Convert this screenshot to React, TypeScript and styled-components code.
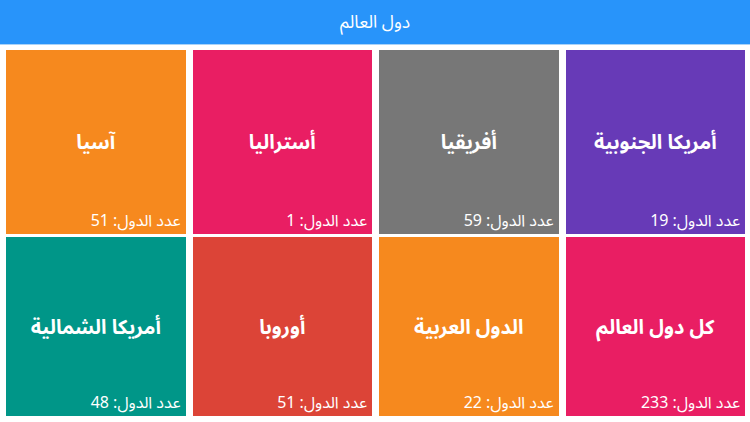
import styled, { createGlobalStyle } from "styled-components";

type Region = {
  name: string;
  count: number;
  color: string;
};

const regions: Region[] = [
  { name: "أمريكا الجنوبية", count: 19, color: "#673ab7" },
  { name: "أفريقيا", count: 59, color: "#777777" },
  { name: "أستراليا", count: 1, color: "#e91e63" },
  { name: "آسيا", count: 51, color: "#f6891e" },
  { name: "كل دول العالم", count: 233, color: "#e91e63" },
  { name: "الدول العربية", count: 22, color: "#f6891e" },
  { name: "أوروبا", count: 51, color: "#dc4437" },
  { name: "أمريكا الشمالية", count: 48, color: "#009688" },
];

export default function App() {
  return (
    <>
      <GlobalStyle />
      <PageSld>
        <HeaderSld>دول العالم</HeaderSld>
        <GridSld>
          {regions.map((r) => (
            <TileSld key={r.name} $color={r.color}>
              <TileTitle>{r.name}</TileTitle>
              <TileCount>عدد الدول: {r.count}</TileCount>
            </TileSld>
          ))}
        </GridSld>
      </PageSld>
    </>
  );
}

const GlobalStyle = createGlobalStyle`
  html, body {
    margin: 0;
    padding: 0;
    background: #ffffff;
  }
  body {
    font-family: "Noto Sans Arabic", "DejaVu Sans", "Noto Sans", sans-serif;
  }
`;

const PageSld = styled.div`
  direction: rtl;
  width: 750px;
  height: 422px;
  display: flex;
  flex-direction: column;
  overflow: hidden;
`;

const HeaderSld = styled.div`
  height: 44px;
  flex-shrink: 0;
  background-color: #2894fa;
  border-bottom: 1px solid #a9d2f8;
  color: #ffffff;
  font-size: 17.5px;
  display: flex;
  align-items: center;
  justify-content: center;
`;

const GridSld = styled.div`
  display: grid;
  grid-template-columns: repeat(4, 1fr);
  grid-template-rows: 184px 179px;
  column-gap: 7px;
  row-gap: 3px;
  padding: 5px 5px 6px 6px;
`;

const TileSld = styled.div<{ $color: string }>`
  background-color: ${(p) => p.$color};
  color: #ffffff;
  display: flex;
  flex-direction: column;
  align-items: center;
  justify-content: center;
  position: relative;
`;

const TileTitle = styled.div`
  font-size: 20px;
  font-weight: bold;
  margin-top: 2px;
`;

const TileCount = styled.div`
  position: absolute;
  right: 5px;
  bottom: 5px;
  font-size: 16px;
  line-height: 1;
`;
